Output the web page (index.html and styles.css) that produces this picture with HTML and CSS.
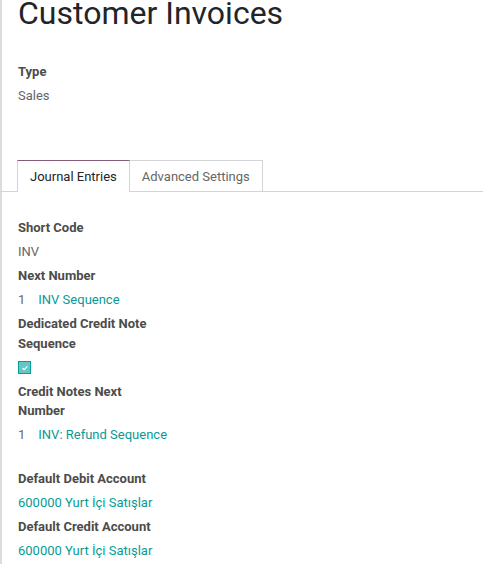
FILE: index.html
```html
<!DOCTYPE html>
<html>
<head>
<meta charset="utf-8">
<link rel="stylesheet" href="styles.css">
</head>
<body>
<div class="sheet">
  <h1 class="title">Customer Invoices</h1>
  <div class="group top-group">
    <div class="label">Type</div>
    <div class="value">Sales</div>
  </div>
  <div class="tabs">
    <div class="tab active">Journal Entries</div>
    <div class="tab">Advanced Settings</div>
  </div>
  <div class="group tab-group">
    <div class="label">Short Code</div>
    <div class="value">INV</div>
    <div class="label">Next Number</div>
    <div class="value"><span class="num">1</span><span class="link">INV Sequence</span></div>
    <div class="label">Dedicated Credit Note Sequence</div>
    <div class="value check-row"><span class="checkbox"><svg viewBox="0 0 10 10" width="8" height="8"><path d="M2 5.2 L4 7 L8 3" fill="none" stroke="#fff" stroke-width="1.6"/></svg></span></div>
    <div class="label">Credit Notes Next Number</div>
    <div class="value"><span class="num">1</span><span class="link">INV: Refund Sequence</span></div>
  </div>
  <div class="group second-group">
    <div class="label">Default Debit Account</div>
    <div class="value"><span class="link">600000 Yurt İçi Satışlar</span></div>
    <div class="label">Default Credit Account</div>
    <div class="value"><span class="link">600000 Yurt İçi Satışlar</span></div>
  </div>
</div>
</body>
</html>
```
FILE: styles.css
```css
html, body {
  margin: 0;
  padding: 0;
  background: #ffffff;
}
body {
  font-family: Roboto, "Noto Sans", sans-serif;
  font-size: 13px;
  color: #4c4c4c;
  overflow: hidden;
  height: 564px;
}
.sheet {
  border-left: 2px solid #dcdcdc;
  min-height: 564px;
  padding-left: 16px;
  box-sizing: border-box;
}
.title {
  margin: -6px 0 0 0;
  font-size: 32px;
  line-height: 38px;
  font-weight: 400;
  color: #212529;
}
.group {
  display: flex;
  flex-direction: column;
  align-items: flex-start;
}
.label, .value {
  line-height: 19.5px;
  margin-bottom: 4.5px;
}
.label {
  font-weight: 700;
  color: #4c4c4c;
  max-width: 145px;
}
.value {
  color: #666666;
}
.top-group {
  margin-top: 30px;
}
.tabs {
  display: flex;
  margin-top: 50px;
  margin-left: -18px;
  padding-left: 17px;
  border-bottom: 1px solid #d4d4d8;
}
.tab {
  padding: 1px 12px 0 12px;
  height: 29px;
  line-height: 30px;
  border: 1px solid #d4d4d8;
  border-bottom: none;
  color: #666666;
  margin-bottom: -1px;
  background: #fff;
}
.tab.active {
  border-top-color: #875A7B;
  color: #212529;
  height: 30px;
}
.tab + .tab {
  border-left: none;
}
.tab-group {
  margin-top: 26px;
}
.num {
  color: #666666;
  margin-right: 13px;
}
.link {
  color: #089a98;
}
.check-row {
  display: flex;
  align-items: center;
  height: 19.5px;
}
.checkbox {
  width: 11px;
  height: 11px;
  border: 1px solid #00A09D;
  background: #66c6c4;
  display: flex;
  align-items: center;
  justify-content: center;
  margin-top: 1px;
}
.checkbox svg {
  display: block;
}
.second-group {
  margin-top: 19.5px;
}
```
